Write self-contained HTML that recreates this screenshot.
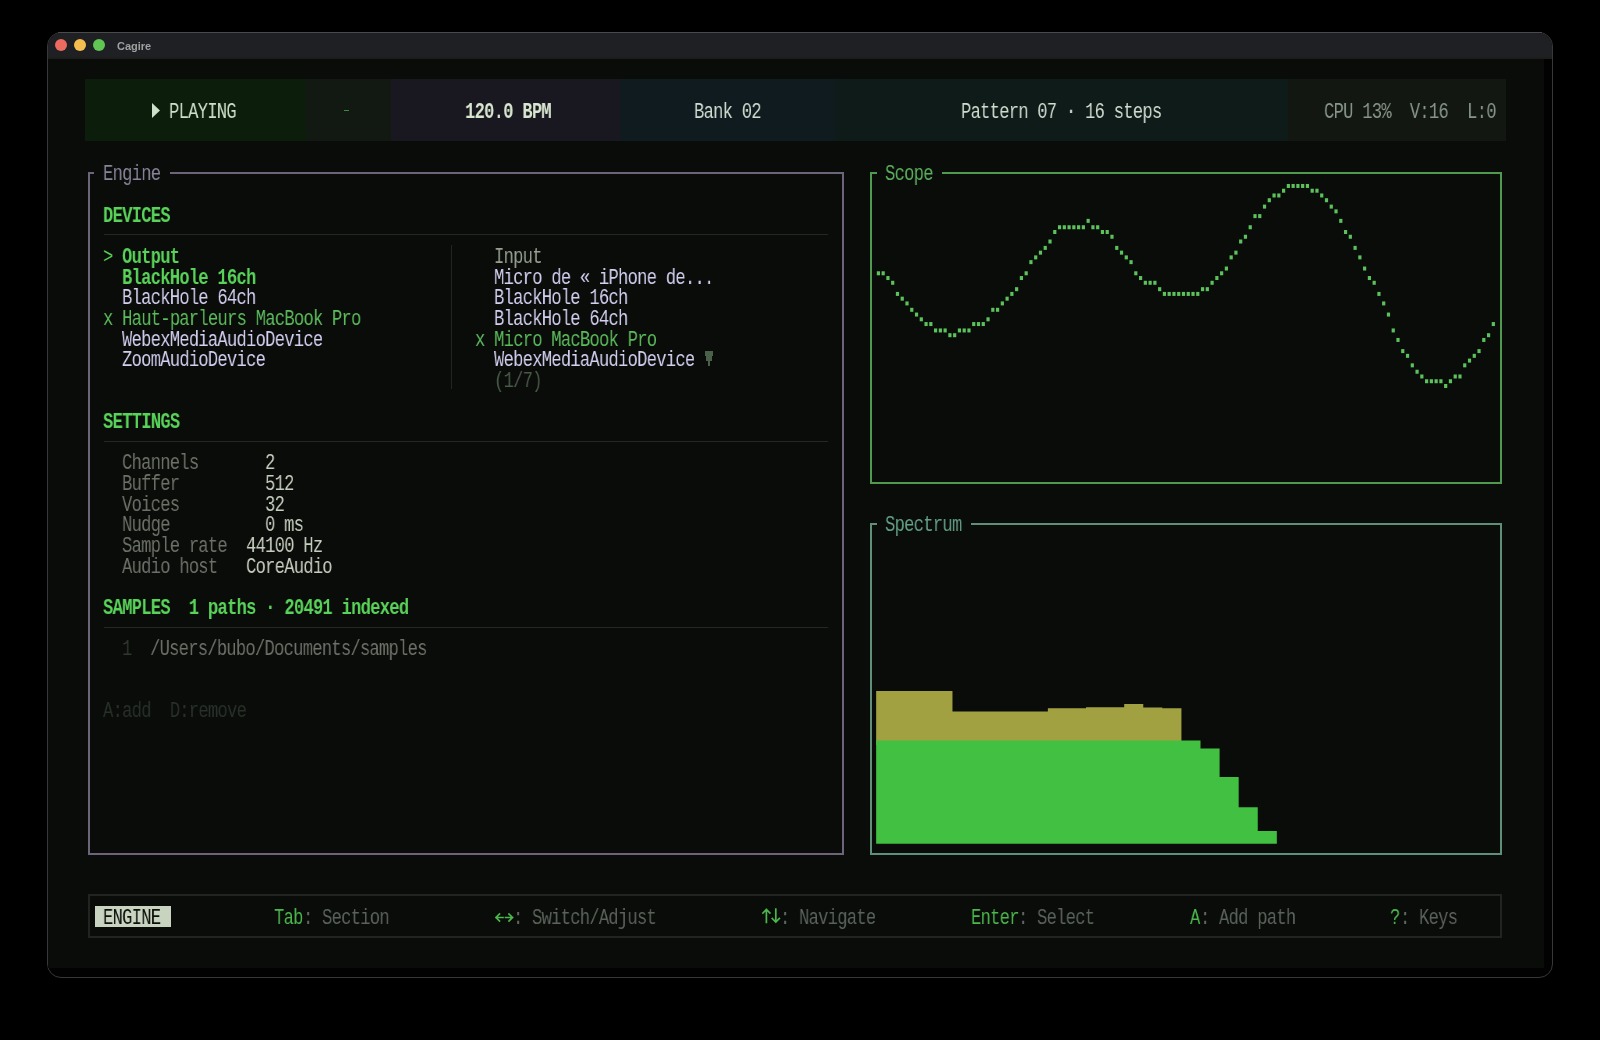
<!DOCTYPE html><html><head><meta charset="utf-8"><style>
html,body{margin:0;padding:0;background:#000;width:1600px;height:1040px;overflow:hidden;}
.r{position:absolute;}
.t{position:absolute;white-space:pre;font-family:"Liberation Mono",monospace;font-size:22px;line-height:21px;letter-spacing:-0.969px;transform:scaleX(0.78);transform-origin:0 0;will-change:transform;}
#win{position:absolute;left:47px;top:32px;width:1504px;height:944px;border:1px solid #38383a;border-radius:14px;background:#020202;overflow:hidden;}
#title{position:absolute;left:48px;top:33px;width:1504px;height:26px;background:#1f2023;border-radius:13px 13px 0 0;border-bottom:2px solid #1d1e1c;box-sizing:border-box;}
.dot{position:absolute;width:12px;height:12px;border-radius:50%;}
#ttext{position:absolute;left:117px;top:38px;font-family:"Liberation Sans",sans-serif;font-weight:700;font-size:11px;line-height:16px;color:#a0a0a0;will-change:transform;}
</style></head><body><div id="win"></div>
<div id="title"></div>
<div class="dot" style="left:54.5px;top:39.3px;background:#ec6a5f"></div>
<div class="dot" style="left:73.8px;top:39.3px;background:#f4bf4f"></div>
<div class="dot" style="left:93.1px;top:39.3px;background:#61c554"></div>
<div id="ttext">Cagire</div>
<div class="r" style="left:48px;top:59px;width:1496px;height:909px;background:#0a0c0a"></div>
<div class="r" style="left:58px;top:32px;width:1484px;height:1px;background:#4a4a4c"></div>
<div class="r" style="left:85.30px;top:79.20px;width:220.70px;height:62.00px;background:#0c1d0c;"></div>
<div class="r" style="left:306.00px;top:79.20px;width:85.00px;height:62.00px;background:#121812;"></div>
<div class="r" style="left:391.00px;top:79.20px;width:229.00px;height:62.00px;background:#19171f;"></div>
<div class="r" style="left:620.00px;top:79.20px;width:215.00px;height:62.00px;background:#101b1f;"></div>
<div class="r" style="left:835.00px;top:79.20px;width:452.50px;height:62.00px;background:#0f1b19;"></div>
<div class="r" style="left:1287.50px;top:79.20px;width:218.30px;height:62.00px;background:#131712;"></div>
<svg class="r" style="left:150px;top:102px;width:12px;height:17px" viewBox="0 0 12 17"><polygon points="2,1 10,8.5 2,16" fill="#cfe0c8"/></svg>
<div class="t" style="left:169.29px;top:101.68px;color:#cfe0c8;">PLAYING</div>
<div class="r" style="left:344.00px;top:109.60px;width:5.00px;height:1.20px;background:#3c8c3c;"></div>
<div class="t" style="left:465.03px;top:101.68px;color:#d8e6d0;font-weight:700;">120.0 BPM</div>
<div class="t" style="left:693.99px;top:101.68px;color:#d0dcd0;">Bank 02</div>
<div class="t" style="left:961.11px;top:101.68px;color:#d0dcd0;">Pattern 07 · 16 steps</div>
<div class="t" style="left:1323.63px;top:101.68px;color:#88968a;">CPU 13%  V:16  L:0</div>
<div class="r" style="left:88.10px;top:172.00px;width:2.00px;height:683.12px;background:#6e6479;"></div>
<div class="r" style="left:841.76px;top:172.00px;width:2.00px;height:683.12px;background:#6e6479;"></div>
<div class="r" style="left:88.10px;top:853.12px;width:755.66px;height:2.00px;background:#6e6479;"></div>
<div class="r" style="left:88.10px;top:172.00px;width:6.27px;height:2.00px;background:#6e6479;"></div>
<div class="r" style="left:169.69px;top:172.00px;width:674.07px;height:2.00px;background:#6e6479;"></div>
<div class="t" style="left:102.51px;top:164.00px;color:#88849a;">Engine</div>
<div class="r" style="left:870.38px;top:172.00px;width:2.00px;height:311.60px;background:#509a50;"></div>
<div class="r" style="left:1500.02px;top:172.00px;width:2.00px;height:311.60px;background:#509a50;"></div>
<div class="r" style="left:870.38px;top:481.60px;width:631.64px;height:2.00px;background:#509a50;"></div>
<div class="r" style="left:870.38px;top:172.00px;width:6.27px;height:2.00px;background:#509a50;"></div>
<div class="r" style="left:942.43px;top:172.00px;width:559.59px;height:2.00px;background:#509a50;"></div>
<div class="t" style="left:884.79px;top:164.00px;color:#5cb05c;">Scope</div>
<div class="r" style="left:870.38px;top:522.88px;width:2.00px;height:332.24px;background:#5f8f78;"></div>
<div class="r" style="left:1500.02px;top:522.88px;width:2.00px;height:332.24px;background:#5f8f78;"></div>
<div class="r" style="left:870.38px;top:853.12px;width:631.64px;height:2.00px;background:#5f8f78;"></div>
<div class="r" style="left:870.38px;top:522.88px;width:6.27px;height:2.00px;background:#5f8f78;"></div>
<div class="r" style="left:971.05px;top:522.88px;width:530.97px;height:2.00px;background:#5f8f78;"></div>
<div class="t" style="left:884.79px;top:514.88px;color:#64a086;">Spectrum</div>
<div class="t" style="left:102.51px;top:205.78px;color:#58d258;font-weight:700;">DEVICES</div>
<div class="r" style="left:103.91px;top:234.42px;width:724.54px;height:1.00px;background:#242824;"></div>
<div class="t" style="left:102.51px;top:247.06px;color:#58d258;">&gt;</div>
<div class="t" style="left:121.59px;top:247.06px;color:#58d258;font-weight:700;">Output</div>
<div class="t" style="left:121.59px;top:267.70px;color:#58d258;font-weight:700;">BlackHole 16ch</div>
<div class="t" style="left:121.59px;top:288.34px;color:#d3cff0;">BlackHole 64ch</div>
<div class="t" style="left:102.51px;top:308.98px;color:#5cbc5c;">x Haut-parleurs MacBook Pro</div>
<div class="t" style="left:121.59px;top:329.62px;color:#d3cff0;">WebexMediaAudioDevice</div>
<div class="t" style="left:121.59px;top:350.26px;color:#d3cff0;">ZoomAudioDevice</div>
<div class="r" style="left:451.12px;top:245.24px;width:1.00px;height:143.48px;background:#222622;"></div>
<div class="t" style="left:493.65px;top:247.06px;color:#98a090;">Input</div>
<div class="t" style="left:493.65px;top:267.70px;color:#d3cff0;">Micro de « iPhone de...</div>
<div class="t" style="left:493.65px;top:288.34px;color:#d3cff0;">BlackHole 16ch</div>
<div class="t" style="left:493.65px;top:308.98px;color:#d3cff0;">BlackHole 64ch</div>
<div class="t" style="left:474.57px;top:329.62px;color:#5cbc5c;">x Micro MacBook Pro</div>
<div class="t" style="left:493.65px;top:350.26px;color:#d3cff0;">WebexMediaAudioDevice</div>
<svg class="r" style="left:705px;top:351px;width:8px;height:15px" viewBox="0 0 8 15"><path d="M0,0H8V5H7V10H5V15H3V10H1V5H0Z" fill="#4a6048"/></svg>
<div class="t" style="left:493.65px;top:370.90px;color:#4a5a48;">(1/7)</div>
<div class="t" style="left:102.51px;top:412.18px;color:#58d258;font-weight:700;">SETTINGS</div>
<div class="r" style="left:103.91px;top:440.82px;width:724.54px;height:1.00px;background:#242824;"></div>
<div class="t" style="left:121.59px;top:453.46px;color:#6c7268;">Channels</div>
<div class="t" style="left:264.69px;top:453.46px;color:#c6cebe;">2</div>
<div class="t" style="left:121.59px;top:474.10px;color:#6c7268;">Buffer</div>
<div class="t" style="left:264.69px;top:474.10px;color:#c6cebe;">512</div>
<div class="t" style="left:121.59px;top:494.74px;color:#6c7268;">Voices</div>
<div class="t" style="left:264.69px;top:494.74px;color:#c6cebe;">32</div>
<div class="t" style="left:121.59px;top:515.38px;color:#6c7268;">Nudge</div>
<div class="t" style="left:264.69px;top:515.38px;color:#c6cebe;">0 ms</div>
<div class="t" style="left:121.59px;top:536.02px;color:#6c7268;">Sample rate</div>
<div class="t" style="left:245.61px;top:536.02px;color:#c6cebe;">44100 Hz</div>
<div class="t" style="left:121.59px;top:556.66px;color:#6c7268;">Audio host</div>
<div class="t" style="left:245.61px;top:556.66px;color:#c6cebe;">CoreAudio</div>
<div class="t" style="left:102.51px;top:597.94px;color:#58d258;font-weight:700;">SAMPLES  1 paths · 20491 indexed</div>
<div class="r" style="left:103.91px;top:626.58px;width:724.54px;height:1.00px;background:#242824;"></div>
<div class="t" style="left:121.59px;top:639.22px;color:#30382f;">1</div>
<div class="t" style="left:150.21px;top:639.22px;color:#6c7268;">/Users/bubo/Documents/samples</div>
<div class="t" style="left:102.51px;top:701.14px;color:#283028;">A:add  D:remove</div>
<svg class="r" style="left:0;top:0;width:1600px;height:1040px" viewBox="0 0 1600 1040"><g fill="#5cc25c"><rect x="876.80" y="271.28" width="3.2" height="4"/><rect x="881.57" y="271.28" width="3.2" height="4"/><rect x="886.33" y="276.03" width="3.2" height="4"/><rect x="891.10" y="280.78" width="3.2" height="4"/><rect x="895.87" y="291.92" width="3.2" height="4"/><rect x="900.63" y="296.67" width="3.2" height="4"/><rect x="905.40" y="301.42" width="3.2" height="4"/><rect x="910.17" y="307.81" width="3.2" height="4"/><rect x="914.94" y="312.56" width="3.2" height="4"/><rect x="919.70" y="317.31" width="3.2" height="4"/><rect x="924.47" y="322.06" width="3.2" height="4"/><rect x="929.24" y="322.06" width="3.2" height="4"/><rect x="934.00" y="328.45" width="3.2" height="4"/><rect x="938.77" y="328.45" width="3.2" height="4"/><rect x="943.54" y="328.45" width="3.2" height="4"/><rect x="948.30" y="333.20" width="3.2" height="4"/><rect x="953.07" y="333.20" width="3.2" height="4"/><rect x="957.84" y="328.45" width="3.2" height="4"/><rect x="962.61" y="328.45" width="3.2" height="4"/><rect x="967.37" y="328.45" width="3.2" height="4"/><rect x="972.14" y="322.06" width="3.2" height="4"/><rect x="976.91" y="322.06" width="3.2" height="4"/><rect x="981.67" y="322.06" width="3.2" height="4"/><rect x="986.44" y="317.31" width="3.2" height="4"/><rect x="991.21" y="307.81" width="3.2" height="4"/><rect x="995.98" y="307.81" width="3.2" height="4"/><rect x="1000.74" y="301.42" width="3.2" height="4"/><rect x="1005.51" y="296.67" width="3.2" height="4"/><rect x="1010.28" y="291.92" width="3.2" height="4"/><rect x="1015.04" y="287.17" width="3.2" height="4"/><rect x="1019.81" y="276.03" width="3.2" height="4"/><rect x="1024.58" y="271.28" width="3.2" height="4"/><rect x="1029.34" y="260.14" width="3.2" height="4"/><rect x="1034.11" y="255.39" width="3.2" height="4"/><rect x="1038.88" y="250.64" width="3.2" height="4"/><rect x="1043.64" y="245.89" width="3.2" height="4"/><rect x="1048.41" y="239.50" width="3.2" height="4"/><rect x="1053.18" y="230.00" width="3.2" height="4"/><rect x="1057.95" y="225.25" width="3.2" height="4"/><rect x="1062.71" y="225.25" width="3.2" height="4"/><rect x="1067.48" y="225.25" width="3.2" height="4"/><rect x="1072.25" y="225.25" width="3.2" height="4"/><rect x="1077.01" y="225.25" width="3.2" height="4"/><rect x="1081.78" y="225.25" width="3.2" height="4"/><rect x="1086.55" y="218.86" width="3.2" height="4"/><rect x="1091.32" y="225.25" width="3.2" height="4"/><rect x="1096.08" y="225.25" width="3.2" height="4"/><rect x="1100.85" y="230.00" width="3.2" height="4"/><rect x="1105.62" y="230.00" width="3.2" height="4"/><rect x="1110.38" y="234.75" width="3.2" height="4"/><rect x="1115.15" y="245.89" width="3.2" height="4"/><rect x="1119.92" y="250.64" width="3.2" height="4"/><rect x="1124.68" y="255.39" width="3.2" height="4"/><rect x="1129.45" y="260.14" width="3.2" height="4"/><rect x="1134.22" y="271.28" width="3.2" height="4"/><rect x="1138.99" y="276.03" width="3.2" height="4"/><rect x="1143.75" y="280.78" width="3.2" height="4"/><rect x="1148.52" y="280.78" width="3.2" height="4"/><rect x="1153.29" y="280.78" width="3.2" height="4"/><rect x="1158.05" y="287.17" width="3.2" height="4"/><rect x="1162.82" y="291.92" width="3.2" height="4"/><rect x="1167.59" y="291.92" width="3.2" height="4"/><rect x="1172.35" y="291.92" width="3.2" height="4"/><rect x="1177.12" y="291.92" width="3.2" height="4"/><rect x="1181.89" y="291.92" width="3.2" height="4"/><rect x="1186.66" y="291.92" width="3.2" height="4"/><rect x="1191.42" y="291.92" width="3.2" height="4"/><rect x="1196.19" y="291.92" width="3.2" height="4"/><rect x="1200.96" y="287.17" width="3.2" height="4"/><rect x="1205.72" y="287.17" width="3.2" height="4"/><rect x="1210.49" y="280.78" width="3.2" height="4"/><rect x="1215.26" y="276.03" width="3.2" height="4"/><rect x="1220.02" y="271.28" width="3.2" height="4"/><rect x="1224.79" y="266.53" width="3.2" height="4"/><rect x="1229.56" y="255.39" width="3.2" height="4"/><rect x="1234.33" y="250.64" width="3.2" height="4"/><rect x="1239.09" y="239.50" width="3.2" height="4"/><rect x="1243.86" y="234.75" width="3.2" height="4"/><rect x="1248.63" y="225.25" width="3.2" height="4"/><rect x="1253.39" y="214.11" width="3.2" height="4"/><rect x="1258.16" y="214.11" width="3.2" height="4"/><rect x="1262.93" y="204.61" width="3.2" height="4"/><rect x="1267.69" y="198.22" width="3.2" height="4"/><rect x="1272.46" y="193.47" width="3.2" height="4"/><rect x="1277.23" y="193.47" width="3.2" height="4"/><rect x="1282.00" y="188.72" width="3.2" height="4"/><rect x="1286.76" y="183.97" width="3.2" height="4"/><rect x="1291.53" y="183.97" width="3.2" height="4"/><rect x="1296.30" y="183.97" width="3.2" height="4"/><rect x="1301.06" y="183.97" width="3.2" height="4"/><rect x="1305.83" y="183.97" width="3.2" height="4"/><rect x="1310.60" y="188.72" width="3.2" height="4"/><rect x="1315.36" y="188.72" width="3.2" height="4"/><rect x="1320.13" y="193.47" width="3.2" height="4"/><rect x="1324.90" y="198.22" width="3.2" height="4"/><rect x="1329.66" y="204.61" width="3.2" height="4"/><rect x="1334.43" y="209.36" width="3.2" height="4"/><rect x="1339.20" y="218.86" width="3.2" height="4"/><rect x="1343.97" y="230.00" width="3.2" height="4"/><rect x="1348.73" y="234.75" width="3.2" height="4"/><rect x="1353.50" y="245.89" width="3.2" height="4"/><rect x="1358.27" y="255.39" width="3.2" height="4"/><rect x="1363.03" y="266.53" width="3.2" height="4"/><rect x="1367.80" y="276.03" width="3.2" height="4"/><rect x="1372.57" y="280.78" width="3.2" height="4"/><rect x="1377.34" y="291.92" width="3.2" height="4"/><rect x="1382.10" y="301.42" width="3.2" height="4"/><rect x="1386.87" y="312.56" width="3.2" height="4"/><rect x="1391.64" y="328.45" width="3.2" height="4"/><rect x="1396.40" y="337.95" width="3.2" height="4"/><rect x="1401.17" y="349.09" width="3.2" height="4"/><rect x="1405.94" y="353.84" width="3.2" height="4"/><rect x="1410.70" y="363.34" width="3.2" height="4"/><rect x="1415.47" y="369.73" width="3.2" height="4"/><rect x="1420.24" y="374.48" width="3.2" height="4"/><rect x="1425.01" y="379.23" width="3.2" height="4"/><rect x="1429.77" y="379.23" width="3.2" height="4"/><rect x="1434.54" y="379.23" width="3.2" height="4"/><rect x="1439.31" y="379.23" width="3.2" height="4"/><rect x="1444.07" y="383.98" width="3.2" height="4"/><rect x="1448.84" y="379.23" width="3.2" height="4"/><rect x="1453.61" y="374.48" width="3.2" height="4"/><rect x="1458.37" y="374.48" width="3.2" height="4"/><rect x="1463.14" y="363.34" width="3.2" height="4"/><rect x="1467.91" y="358.59" width="3.2" height="4"/><rect x="1472.68" y="353.84" width="3.2" height="4"/><rect x="1477.44" y="349.09" width="3.2" height="4"/><rect x="1482.21" y="337.95" width="3.2" height="4"/><rect x="1486.98" y="333.20" width="3.2" height="4"/><rect x="1491.74" y="322.06" width="3.2" height="4"/></g></svg>
<svg class="r" style="left:0;top:0;width:1600px;height:1040px" viewBox="0 0 1600 1040"><path d="M876.15,745.00 L876.15,691.00 L952.47,691.00 L952.47,711.50 L1047.87,711.50 L1047.87,708.30 L1086.03,708.30 L1086.03,707.20 L1124.19,707.20 L1124.19,704.00 L1143.27,704.00 L1143.27,707.50 L1162.35,707.50 L1162.35,708.30 L1181.43,708.30 L1181.43,745.00 Z" fill="#a2a142"/><path d="M876.15,843.80 L876.15,740.40 L1200.51,740.40 L1200.51,748.50 L1219.59,748.50 L1219.59,777.10 L1238.67,777.10 L1238.67,807.30 L1257.75,807.30 L1257.75,830.90 L1276.83,830.90 L1276.83,843.80 Z" fill="#42c042"/></svg>
<div class="r" style="left:88.10px;top:894.40px;width:1413.92px;height:2.00px;background:#20261f;"></div>
<div class="r" style="left:88.10px;top:935.68px;width:1413.92px;height:2.00px;background:#20261f;"></div>
<div class="r" style="left:88.10px;top:894.40px;width:2.00px;height:43.28px;background:#20261f;"></div>
<div class="r" style="left:1500.02px;top:894.40px;width:2.00px;height:43.28px;background:#20261f;"></div>
<div class="r" style="left:95.00px;top:906.00px;width:76.00px;height:20.50px;background:#c8d4c0;"></div>
<div class="t" style="left:102.51px;top:907.54px;color:#0c0e0c;">ENGINE</div>
<div class="t" style="left:274.23px;top:907.54px;color:#4cb84c;">Tab</div>
<div class="t" style="left:302.85px;top:907.54px;color:#667066;">:</div>
<div class="t" style="left:321.93px;top:907.54px;color:#5a625a;">Section</div>
<div class="t" style="left:512.73px;top:907.54px;color:#667066;">:</div>
<div class="t" style="left:531.81px;top:907.54px;color:#5a625a;">Switch/Adjust</div>
<div class="t" style="left:779.85px;top:907.54px;color:#667066;">:</div>
<div class="t" style="left:798.93px;top:907.54px;color:#5a625a;">Navigate</div>
<div class="t" style="left:970.65px;top:907.54px;color:#4cb84c;">Enter</div>
<div class="t" style="left:1018.35px;top:907.54px;color:#667066;">:</div>
<div class="t" style="left:1037.43px;top:907.54px;color:#5a625a;">Select</div>
<div class="t" style="left:1190.07px;top:907.54px;color:#4cb84c;">A</div>
<div class="t" style="left:1199.61px;top:907.54px;color:#667066;">:</div>
<div class="t" style="left:1218.69px;top:907.54px;color:#5a625a;">Add path</div>
<div class="t" style="left:1390.41px;top:907.54px;color:#4cb84c;">?</div>
<div class="t" style="left:1399.95px;top:907.54px;color:#667066;">:</div>
<div class="t" style="left:1419.03px;top:907.54px;color:#5a625a;">Keys</div>
<svg class="r" style="left:0;top:0;width:1600px;height:1040px" viewBox="0 0 1600 1040"><g stroke="#4cb84c" stroke-width="1.7" fill="none" stroke-linecap="square"><path d="M496,917.5H503M499.5,914L496,917.5L499.5,921"/><path d="M505.5,917.5H512.5M509,914L512.5,917.5L509,921"/><path d="M766.4,909.5V922.5M762.9,913L766.4,909.5L769.9,913"/><path d="M775.8,909V922M772.3,918.5L775.8,922L779.3,918.5"/></g></svg></body></html>
